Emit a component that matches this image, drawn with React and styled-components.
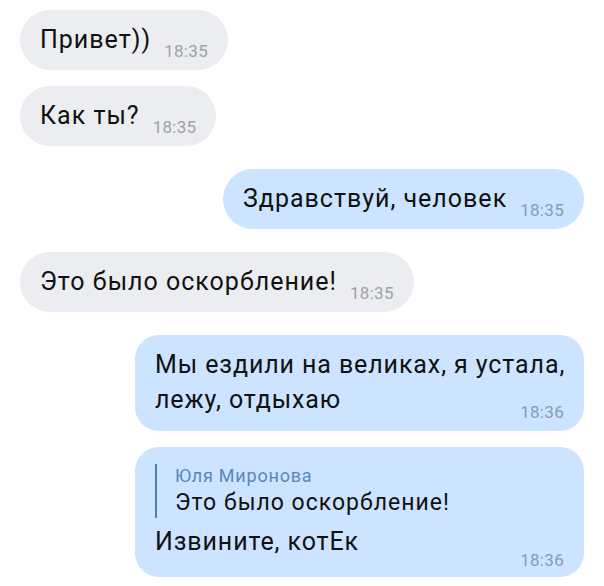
import React from "react";
import styled, { createGlobalStyle } from "styled-components";

const GlobalStyle = createGlobalStyle`
  html, body {
    margin: 0;
    padding: 0;
    background: #ffffff;
  }
  body {
    font-family: Roboto, "Noto Sans", "Liberation Sans", sans-serif;
    -webkit-font-smoothing: antialiased;
  }
`;

const Chat = styled.div`
  display: flex;
  flex-direction: column;
  padding: 10px 20px 0 20px;
  width: 604px;
  box-sizing: border-box;
`;

const Row = styled.div`
  display: flex;
  justify-content: ${(p) => (p.$out ? "flex-end" : "flex-start")};
  margin-top: ${(p) => p.$gap}px;
`;

const Bubble = styled.div`
  background: ${(p) => (p.$out ? "#cce4ff" : "#ebedf0")};
  color: #111111;
  border-radius: 30px;
  padding: 16px 20px;
  display: flex;
  align-items: flex-end;
  box-sizing: border-box;
`;

const WideBubble = styled.div`
  background: ${(p) => (p.$out ? "#cce4ff" : "#ebedf0")};
  color: #111111;
  border-radius: 24px;
  padding: 12px 20px ${(p) => p.$bottom}px 20px;
  width: 449px;
  box-sizing: border-box;
  display: flex;
  flex-direction: column;
`;

const Text = styled.div`
  font-size: 25px;
  line-height: 28px;
  letter-spacing: 1px;
  white-space: nowrap;
`;

const Line = styled.div`
  font-size: 25px;
  line-height: 35px;
  letter-spacing: 0.9px;
  white-space: nowrap;
`;

const LastLine = styled.div`
  display: flex;
  align-items: flex-end;
  justify-content: space-between;
  margin-top: ${(p) => p.$top || 0}px;
`;

const Time = styled.span`
  font-size: 17px;
  line-height: 18px;
  letter-spacing: 0.3px;
  color: ${(p) => (p.$out ? "#8a9bb1" : "#a0a2a7")};
  margin-left: 13px;
  margin-bottom: ${(p) => p.$drop || -6}px;
  white-space: nowrap;
`;

const Reply = styled.div`
  margin-top: 5px;
  border-left: 2px solid #4f7db5;
  padding-left: 18px;
  display: flex;
  flex-direction: column;
`;

const ReplyAuthor = styled.div`
  font-size: 18px;
  line-height: 24px;
  letter-spacing: 0.8px;
  color: #5a86bb;
`;

const ReplyText = styled.div`
  font-size: 23px;
  line-height: 30px;
  letter-spacing: 1px;
  color: #111111;
`;

const messages = [
  { out: false, text: "Привет))", time: "18:35" },
  { out: false, text: "Как ты?", time: "18:35" },
  { out: true, text: "Здравствуй, человек", time: "18:35" },
  { out: false, text: "Это было оскорбление!", time: "18:35" },
  {
    out: true,
    wide: true,
    lines: ["Мы ездили на великах, я устала,", "лежу, отдыхаю"],
    time: "18:36",
    drop: -4,
    bottom: 14,
  },
  {
    out: true,
    wide: true,
    reply: { author: "Юля Миронова", text: "Это было оскорбление!" },
    lines: ["Извините, котЕк"],
    time: "18:36",
    drop: -10,
    bottom: 18,
  },
];

function WideMessage({ m }) {
  const head = m.lines.slice(0, -1);
  const last = m.lines[m.lines.length - 1];
  return (
    <WideBubble $out={m.out} $bottom={m.bottom}>
      {m.reply && (
        <Reply>
          <ReplyAuthor>{m.reply.author}</ReplyAuthor>
          <ReplyText>{m.reply.text}</ReplyText>
        </Reply>
      )}
      {head.map((l, i) => (
        <Line key={i}>{l}</Line>
      ))}
      <LastLine $top={m.reply ? 6 : 0}>
        <Line>{last}</Line>
        <Time $out={m.out} $drop={m.drop}>
          {m.time}
        </Time>
      </LastLine>
    </WideBubble>
  );
}

export default function App() {
  return (
    <>
      <GlobalStyle />
      <Chat>
        {messages.map((m, i) => {
          const prev = messages[i - 1];
          const gap = i === 0 ? 0 : prev.out === m.out ? 16 : 23;
          return (
            <Row key={i} $out={m.out} $gap={gap}>
              {m.wide ? (
                <WideMessage m={m} />
              ) : (
                <Bubble $out={m.out}>
                  <Text>{m.text}</Text>
                  <Time $out={m.out}>{m.time}</Time>
                </Bubble>
              )}
            </Row>
          );
        })}
      </Chat>
    </>
  );
}
